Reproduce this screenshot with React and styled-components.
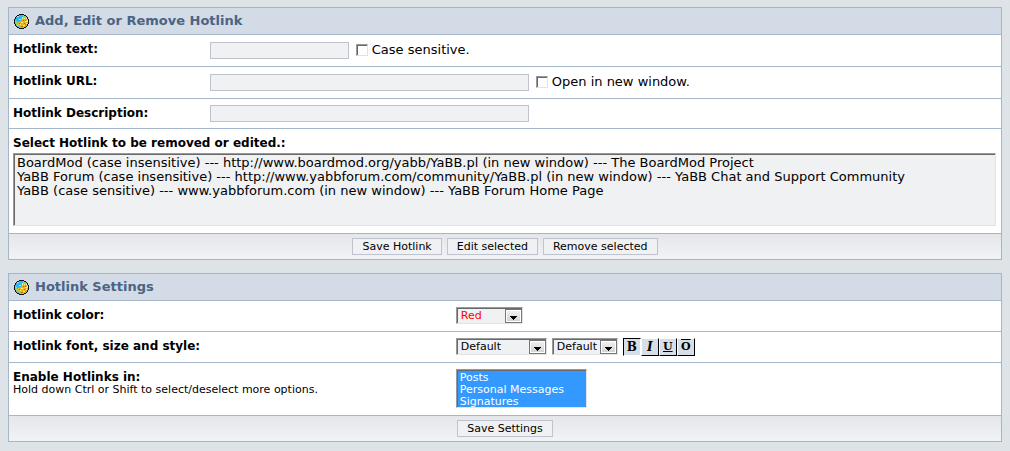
import React, { useState } from "react";
import styled, { createGlobalStyle } from "styled-components";

const hotlinks = [
  "BoardMod (case insensitive) --- http://www.boardmod.org/yabb/YaBB.pl (in new window) --- The BoardMod Project",
  "YaBB Forum (case insensitive) --- http://www.yabbforum.com/community/YaBB.pl (in new window) --- YaBB Chat and Support Community",
  "YaBB (case sensitive) --- www.yabbforum.com (in new window) --- YaBB Forum Home Page",
];

const sections = ["Posts", "Personal Messages", "Signatures"];

const GlobeIcon = () => (
  <svg width="15" height="15" viewBox="0 0 15 15" shapeRendering="crispEdges" aria-hidden="true">
    <path
      d="M5 0h5v1h2v1h1v1h1v2h1v5h-1v2h-1v1h-1v1h-2v1h-5v-1h-2v-1h-1v-1h-1v-2h-1v-5h1v-2h1v-1h1v-1h2z"
      fill="#111"
    />
    <path d="M5 1h5v1h2v1h1v2h1v5h-1v2h-1v1h-2v1h-5v-1h-2v-1h-1v-2h-1v-5h1v-2h1v-1h2z" fill="#2fb8f4" />
    <path d="M1 6h1v1h1v2h1v2h1v1h-2v-1h-1v-2h-1z M9 1h1v1h2v1h1v1h-3v-1h-1z" fill="#8fd66b" />
    <path d="M3 2h2v1h-2z M5 5h2v1h-2z" fill="#a6e3fa" />
    <path
      d="M8 3h3v1h2v1h1v5h-1v2h-1v1h-2v1h-4v-1h-1v-2h-1v-3h2v-1h2v-1h-1v-1h1z"
      fill="#e6b422"
    />
    <path d="M8 3h1v2h-1z M10 4h1v1h-1z M11 7h2v1h-2z M7 8h2v1h-2z M6 10h1v1h-1z M9 11h2v1h-2z" fill="#ffee70" />
    <path d="M12 4h1v1h-1z M13 6h1v2h-1z M12 9h1v1h-1z" fill="#ffe6cc" />
    <path d="M9 6h1v1h-1z M11 6h1v1h-1z M10 9h1v1h-1z M5 9h1v1h-1z M7 12h2v1h-2z M11 11h1v1h-1z" fill="#a8740f" />
  </svg>
);

const Dropdown = ({ id, label, options, width, color }) => (
  <SelectBox $width={width}>
    <Select id={id} aria-label={label} $color={color}>
      {options.map((option) => (
        <option key={option}>{option}</option>
      ))}
    </Select>
    <Arrow>
      <svg width="7" height="4" viewBox="0 0 7 4" shapeRendering="crispEdges" aria-hidden="true">
        <path d="M0 0h7v1h-1v1h-1v1h-1v1h-1v-1h-1v-1h-1v-1h-1z" fill="#000" />
      </svg>
    </Arrow>
  </SelectBox>
);

const App = () => {
  const [styles, setStyles] = useState({ bold: true });

  const toggleStyle = (name) => {
    setStyles({ ...styles, [name]: !styles[name] });
  };

  return (
    <Page>
      <GlobalStyle />
      <Panel>
        <Header>
          <GlobeIcon />
          <Title>Add, Edit or Remove Hotlink</Title>
        </Header>
        <Row>
          <Label htmlFor="text">Hotlink text:</Label>
          <Field $pad={7}>
            <Input id="text" type="text" $width={139} />
            <CheckLabel>
              <Checkbox type="checkbox" />
              Case sensitive.
            </CheckLabel>
          </Field>
        </Row>
        <Row>
          <Label htmlFor="url">Hotlink URL:</Label>
          <Field $pad={7}>
            <Input id="url" type="text" $width={319} />
            <CheckLabel>
              <Checkbox type="checkbox" />
              Open in new window.
            </CheckLabel>
          </Field>
        </Row>
        <Row>
          <Label htmlFor="description">Hotlink Description:</Label>
          <Field>
            <Input id="description" type="text" $width={319} />
          </Field>
        </Row>
        <ListRow>
          <Label htmlFor="hotlinks">Select Hotlink to be removed or edited.:</Label>
          <HotlinkList id="hotlinks" size="5">
            {hotlinks.map((link) => (
              <option key={link}>{link}</option>
            ))}
          </HotlinkList>
        </ListRow>
        <Footer>
          <Button type="button">Save Hotlink</Button>
          <Button type="button">Edit selected</Button>
          <Button type="button">Remove selected</Button>
        </Footer>
      </Panel>

      <Panel>
        <Header>
          <GlobeIcon />
          <Title>Hotlink Settings</Title>
        </Header>
        <SettingRow>
          <Label htmlFor="color">Hotlink color:</Label>
          <Field>
            <Dropdown id="color" options={["Red"]} width={67} color="#f00" />
          </Field>
        </SettingRow>
        <SettingRow>
          <Label htmlFor="font">Hotlink font, size and style:</Label>
          <Field>
            <Dropdown id="font" options={["Default"]} width={91} />
            <Dropdown label="Hotlink size" options={["Default"]} width={66} />
            <StyleButtons>
              <StyleButton type="button" aria-label="Bold" $pressed={styles.bold} onClick={() => toggleStyle("bold")}>
                B
              </StyleButton>
              <StyleButton type="button" aria-label="Italic" $italic $pressed={styles.italic} onClick={() => toggleStyle("italic")}>
                I
              </StyleButton>
              <StyleButton type="button" aria-label="Underline" $line="underline" $pressed={styles.underline} onClick={() => toggleStyle("underline")}>
                U
              </StyleButton>
              <StyleButton type="button" aria-label="Overline" $line="overline" $pressed={styles.overline} onClick={() => toggleStyle("overline")}>
                O
              </StyleButton>
            </StyleButtons>
          </Field>
        </SettingRow>
        <SettingRow>
          <div>
            <Label htmlFor="sections">Enable Hotlinks in:</Label>
            <Hint>Hold down Ctrl or Shift to select/deselect more options.</Hint>
          </div>
          <Field>
            <SectionList id="sections" multiple size="3" defaultValue={sections}>
              {sections.map((section) => (
                <option key={section}>{section}</option>
              ))}
            </SectionList>
          </Field>
        </SettingRow>
        <Footer>
          <Button type="button">Save Settings</Button>
        </Footer>
      </Panel>
    </Page>
  );
};

const GlobalStyle = createGlobalStyle`
  * {
    box-sizing: border-box;
  }

  body {
    margin: 0;
    background-color: #dee3e7;
    color: #000;
    font-family: Verdana, "DejaVu Sans", sans-serif;
    font-size: 12px;
    line-height: 16px;
  }

  input, select, button {
    margin: 0;
    font-family: inherit;
    font-size: inherit;
    color: inherit;
    border-radius: 0;
  }
`;

const Page = styled.div`
  display: flex;
  flex-direction: column;
  gap: 13px;
  padding: 7px 8px;
`;

const Panel = styled.form`
  border: 1px solid #a5b5ca;
  background-color: #fff;
`;

const Header = styled.div`
  display: flex;
  align-items: center;
  gap: 6px;
  padding: 5px;
  background-color: #d3dbe6;
`;

const Title = styled.h2`
  margin: 0;
  color: #4a6484;
  font-size: 13px;
  line-height: 16px;
`;

const Row = styled.div`
  display: grid;
  grid-template-columns: 20% 1fr;
  padding: 0 4px;
  border-top: 1px solid #a5b5ca;
`;

const SettingRow = styled(Row)`
  grid-template-columns: 45% 1fr;
  min-height: 31px;
`;

const ListRow = styled.div`
  display: flex;
  flex-direction: column;
  gap: 2px;
  padding: 0 5px 7px 4px;
  border-top: 1px solid #a5b5ca;
`;

const Label = styled.label`
  display: block;
  padding-top: 6px;
  font-weight: bold;
`;

const Hint = styled.div`
  font-size: 11px;
  line-height: 10px;
`;

const Field = styled.div`
  display: flex;
  align-items: flex-start;
  gap: 5px;
  padding: ${(props) => props.$pad || 6}px 0;
`;

const Input = styled.input`
  width: ${(props) => props.$width}px;
  height: 17px;
  padding: 0 2px;
  border: 1px solid #bfc3d0;
  background-color: #f0f1f3;
`;

const CheckLabel = styled.label`
  display: flex;
  align-items: center;
  gap: 4px;
  margin-left: 2px;
  font-size: 13px;
`;

const Checkbox = styled.input`
  appearance: none;
  width: 12px;
  height: 12px;
  border: 1px solid;
  border-color: #999 #e3e3e3 #e3e3e3 #999;
  box-shadow: inset 1px 1px 0 #696969;
  background-color: #fff;

  &:checked {
    background-color: #4a6484;
  }
`;

const HotlinkList = styled.select`
  width: 100%;
  height: 73px;
  padding: 1px 0 0 1px;
  border: 1px solid;
  border-color: #999 #e3e3e3 #e3e3e3 #999;
  box-shadow: inset 1px 1px 0 #696969;
  background-color: #f0f1f3;
  font-size: 13px;
  overflow: hidden;
  outline: none;

  option {
    height: 14px;
    min-height: 14px;
    padding: 0 2px;
    line-height: 14px;
  }
`;

const SectionList = styled.select`
  width: 131px;
  height: 39px;
  margin-bottom: 1px;
  padding: 1px 0 0 1px;
  border: 1px solid;
  border-color: #999 #e3e3e3 #e3e3e3 #999;
  box-shadow: inset 1px 1px 0 #696969;
  background-color: #f0f1f3;
  font-size: 11px;
  overflow: hidden;
  outline: none;

  option {
    height: 12px;
    min-height: 12px;
    padding: 0 2px;
    line-height: 12px;
  }

  option:checked {
    background: linear-gradient(#39f, #39f);
    color: #fff;
    -webkit-text-fill-color: #fff;
  }
`;

const Footer = styled.div`
  display: flex;
  justify-content: center;
  gap: 5px;
  padding: 4px;
  border-top: 1px solid #a5b5ca;
  background: linear-gradient(#e4e6ea, #f2f3f5);
`;

const Button = styled.button`
  height: 17px;
  padding: 0 9px;
  border: 1px solid #bfc3d0;
  background-color: #f0f1f3;
  font-size: 11px;
  line-height: 15px;
  cursor: pointer;
`;

const SelectBox = styled.div`
  position: relative;
  width: ${(props) => props.$width}px;
`;

const Select = styled.select`
  appearance: none;
  display: block;
  width: 100%;
  height: 17px;
  padding: 1px 18px 0 4px;
  border: 1px solid;
  border-color: #999 #e3e3e3 #e3e3e3 #999;
  box-shadow: inset 1px 1px 0 #696969;
  background-color: #f0f1f3;
  color: ${(props) => props.$color || "#000"};
  font-size: 11px;
  line-height: 14px;
`;

const Arrow = styled.span`
  position: absolute;
  top: 2px;
  right: 1px;
  display: flex;
  align-items: center;
  justify-content: center;
  width: 17px;
  height: 14px;
  padding-top: 4px;
  border: 1px solid #777;
  box-shadow: inset 1px 1px 0 #fff, inset -1px -1px 0 #fff;
  background: linear-gradient(#f3f3f3, #d0d0d0);
  pointer-events: none;
`;

const StyleButtons = styled.div`
  display: flex;
`;

const StyleButton = styled.button`
  display: flex;
  align-items: center;
  justify-content: center;
  width: 18px;
  height: 18px;
  padding: 0;
  border: 1px solid;
  border-color: ${(props) => (props.$pressed ? "#000 #fff #fff #000" : "#fff #000 #000 #fff")};
  background-color: #d6dfe7;
  font-family: "DejaVu Serif", serif;
  font-size: ${(props) => (props.$line ? 11 : 12)}px;
  font-weight: bold;
  font-style: ${(props) => (props.$italic ? "italic" : "normal")};
  text-decoration: ${(props) => props.$line || "none"};
  line-height: 14px;
  cursor: pointer;
`;

export default App;
